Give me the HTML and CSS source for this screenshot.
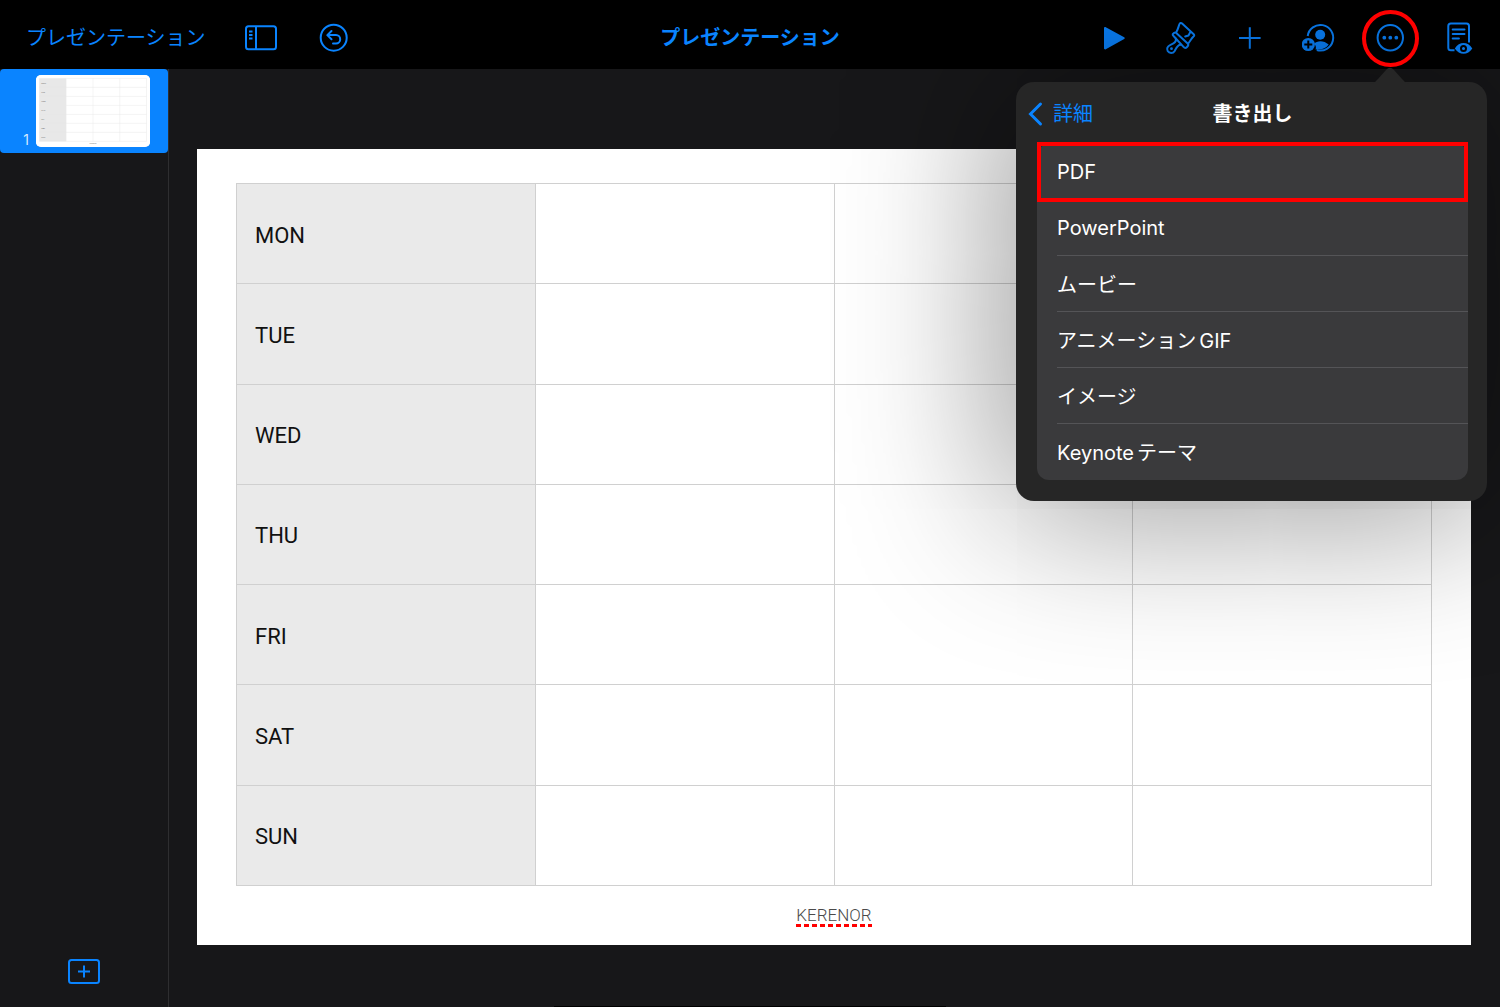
FILE: index.html
```html
<!DOCTYPE html>
<html lang="ja">
<head>
<meta charset="utf-8">
<meta name="viewport" content="width=device-width, initial-scale=1">
<title>プレゼンテーション</title>
<link rel="stylesheet" href="styles.css">
</head>
<body>
<div class="app">
  <header class="toolbar">
    <div class="toolbar-group toolbar-left">
      <a class="back-link" href="#">プレゼンテーション</a>
      <button class="tool" type="button" aria-label="表示">
        <svg viewBox="0 0 40 40"><rect x="6" y="8.300" width="30" height="23" rx="2.500"/><path d="M16 8.500v23M9 13.500h3.500M9 17h3.500M9 20.500h3.500"/></svg>
      </button>
      <button class="tool" type="button" aria-label="取り消す">
        <svg viewBox="0 0 40 40"><circle cx="19.700" cy="19.700" r="13"/><path d="M17.500 13l-4.200 4.100 4.200 4.100M13.500 17.100h8.500a4.200 4.200 0 0 1 0 8.400h-3" stroke-linecap="round" stroke-linejoin="round"/></svg>
      </button>
    </div>
    <h1 class="doc-title">プレゼンテーション</h1>
    <div class="toolbar-group toolbar-right">
      <button class="tool" type="button" aria-label="再生">
        <svg viewBox="0 0 40 40"><path class="solid" d="M9 10.200c0-1 .9-1.500 1.800-1L29.200 19.300c.8.500.8 1.200 0 1.700L10.800 31.200c-.9.500-1.800 0-1.800-1z"/></svg>
      </button>
      <button class="tool" type="button" aria-label="フォーマット">
        <svg viewBox="0 0 40 40" stroke-linejoin="round" stroke-linecap="round"><path d="M12.300 14.200C14 11.500 14.500 8.500 15.500 6c.5-1.200 1.700-1.200 2.600-.4L29.700 16.300c.8.800.7 1.600-.2 2.200-2 1.800-3.200 4.300-5.600 7.300M26.500 13.600l-2 3.900-3.300 1"/><path d="M12 14.700c-1-.8-3.800 1-3.300 2.200.2.500.7 1 1.300 1.600l9.500 10.400c1.300 1.500 2.200 1.500 3.500.1 1.500-1.500 1.800-2.500.7-3.500z"/><path d="M11.800 20.600c1 3.600-1.800 5-5.300 6.300-3.300 1.400-4 4-2.800 6.200 1.500 2.600 5.300 2.700 7-.1 1.500-3 2.800-6.600 6.300-6.300"/><circle class="solid" cx="7.500" cy="30.700" r="1.400"/></svg>
      </button>
      <button class="tool" type="button" aria-label="挿入">
        <svg viewBox="0 0 40 40"><path d="M16.800 9.200v21.600M6 20h21.600"/></svg>
      </button>
      <button class="tool" type="button" aria-label="共同制作">
        <svg viewBox="0 0 40 40"><path d="M5.700 18A12.800 12.800 0 1 1 14.800 32"/><circle class="solid" cx="18.200" cy="16.700" r="5"/><path class="solid" d="M12 25.700c3-3.400 10-3.700 14.700.9-2.600 3.900-7.500 5.500-13.200 4.800.9-2 .4-4.200-1.500-5.700z"/><circle class="solid" cx="6.300" cy="26.500" r="6.600"/><path class="cutout" d="M6.300 22.500v8M2.300 26.500h8"/></svg>
      </button>
      <div class="menu-anchor">
        <button class="tool" type="button" aria-label="詳細" aria-expanded="true">
          <svg viewBox="0 0 40 40"><circle cx="19.300" cy="19.700" r="12.700"/><g class="solid"><circle cx="13.300" cy="19.700" r="1.900"/><circle cx="19.300" cy="19.700" r="1.900"/><circle cx="25.300" cy="19.700" r="1.900"/></g></svg>
        </button>
        <section class="popover" aria-label="書き出し">
          <svg class="popover-arrow" viewBox="0 0 44 18"><path d="M0 18c6 0 7-2 10-5l8-9c3-3 5-3 8 0l8 9c3 3 4 5 10 5z"/></svg>
          <div class="popover-head">
            <button class="popover-back" type="button">
              <svg viewBox="0 0 16 26"><path d="M13.500 3L3.500 13l10 10"/></svg>詳細
            </button>
            <h2 class="popover-title">書き出し</h2>
          </div>
          <ul class="export-list">
            <li class="marked"><button type="button">PDF</button></li>
            <li><button type="button">PowerPoint</button></li>
            <li><button type="button">ムービー</button></li>
            <li><button type="button">アニメーション<span class="latin-tail">GIF</span></button></li>
            <li><button type="button">イメージ</button></li>
            <li><button type="button">Keynote<span class="kana-tail">テーマ</span></button></li>
          </ul>
        </section>
        <span class="ring"></span>
      </div>
      <button class="tool" type="button" aria-label="閲覧">
        <svg viewBox="0 0 40 40"><path d="M14.500 32.200h-3.700a2.500 2.500 0 0 1-2.500-2.500V8a2.500 2.500 0 0 1 2.500-2.500h15.700A2.500 2.500 0 0 1 29 8v16.500"/><path d="M12.700 11.500h11.800M12.700 16h11.800M12.700 20.500h6.200" stroke-linecap="round"/><path class="solid" d="M14.800 30.500c4.500-7.200 13-7.200 17.500 0-4.500 7-13 7-17.500 0z"/><circle class="pupil" cx="23.500" cy="30.400" r="2.500"/></svg>
      </button>
    </div>
  </header>

  <div class="workspace">
    <aside class="sidebar">
      <button class="slide-item" type="button" aria-label="スライド 1">
        <span class="slide-number">1</span>
        <svg class="thumb" viewBox="0 0 1274 796">
          <rect width="1274" height="796" fill="#fff"/>
          <rect x="39" y="34" width="300" height="703" fill="#e8e8e8"/>
          <path d="M39 34h1196v703H39zM637 34v703M936 34v703M39 134h1196M39 235h1196M39 335h1196M39 436h1196M39 536h1196M39 637h1196" fill="none" stroke="#e6e6e6" stroke-width="5"/>
          <g font-size="24" fill="#777"><text x="58" y="93">MON</text><text x="58" y="193">TUE</text><text x="58" y="293">WED</text><text x="58" y="394">THU</text><text x="58" y="494">FRI</text><text x="58" y="595">SAT</text><text x="58" y="695">SUN</text><text x="598" y="772" font-size="18">KERENOR</text></g>
        </svg>
      </button>
      <button class="tool add-slide" type="button" aria-label="スライドを追加">
        <svg viewBox="0 0 40 40"><rect x="5" y="9" width="30" height="23" rx="2.500"/><path d="M20 14.500v12M14 20.500h12"/></svg>
      </button>
    </aside>
    <main class="canvas">
      <article class="slide">
        <table class="week">
          <tr><th scope="row">MON</th><td></td><td></td><td></td></tr>
          <tr><th scope="row">TUE</th><td></td><td></td><td></td></tr>
          <tr><th scope="row">WED</th><td></td><td></td><td></td></tr>
          <tr><th scope="row">THU</th><td></td><td></td><td></td></tr>
          <tr><th scope="row">FRI</th><td></td><td></td><td></td></tr>
          <tr><th scope="row">SAT</th><td></td><td></td><td></td></tr>
          <tr><th scope="row">SUN</th><td></td><td></td><td></td></tr>
        </table>
        <p class="caption"><span class="misspelled">KERENOR</span></p>
      </article>
    </main>
  </div>
  <div class="home-bar"></div>
</div>
</body>
</html>
```
FILE: styles.css
```css
:root {
  --blue: #0a84ff;
  --red: #ff0000;
  --surface: #171719;
}

* { box-sizing: border-box; }

body {
  margin: 0;
  background: var(--surface);
  font-family: Inter, "Noto Sans CJK JP", sans-serif;
  font-size: 20px;
}

button {
  padding: 0;
  border: 0;
  background: none;
  color: inherit;
  font: inherit;
  text-align: left;
}

.app {
  display: flex;
  flex-direction: column;
  min-height: 100vh;
  overflow: hidden;
}

/* Toolbar */
.toolbar {
  position: relative;
  z-index: 1;
  display: grid;
  grid-template-columns: 1fr auto 1fr;
  align-items: center;
  height: 69px;
  padding: 7px 20px 0 26px;
  background: #000;
  color: var(--blue);
}

.toolbar-group { display: flex; align-items: center; }
.toolbar-left { gap: 34px; }
.toolbar-right { justify-content: flex-end; gap: 29px; margin-left: -6px; }

.back-link { color: inherit; text-decoration: none; white-space: nowrap; line-height: 28px; }

.doc-title { margin: 0 6px 0 0; font-size: 20px; line-height: 28px; font-weight: 700; white-space: nowrap; }

.tool {
  display: block;
  width: 40px;
  height: 40px;
  color: var(--blue);
}

.tool svg {
  display: block;
  width: 40px;
  height: 40px;
  fill: none;
  stroke: currentColor;
  stroke-width: 2;
}

.tool .solid { fill: currentColor; stroke: none; }
.tool .cutout { stroke: #000; }
.tool .pupil { fill: currentColor; stroke: #000; stroke-width: 2; }

.menu-anchor { position: relative; }

.ring {
  position: absolute;
  top: -8px;
  left: -9px;
  width: 57px;
  height: 57px;
  border: 4px solid var(--red);
  border-radius: 50%;
  pointer-events: none;
}

/* Export menu */
.popover {
  position: absolute;
  top: 64px;
  right: -76px;
  width: 471px;
  padding: 0 19px 21px 21px;
  border-radius: 18px;
  background: #262626;
  color: #fff;
  box-shadow: 0 0 160px 10px rgba(0, 0, 0, .45);
}

.popover-arrow {
  position: absolute;
  top: -16px;
  right: 75px;
  width: 44px;
  height: 18px;
  fill: #262626;
}

.popover-head {
  display: grid;
  grid-template-columns: 1fr auto 1fr;
  align-items: center;
  height: 62px;
  padding-top: 2px;
}

.popover-back {
  display: flex;
  align-items: center;
  gap: 10px;
  margin-left: -10px;
  color: var(--blue);
  line-height: 28px;
}

.popover-back svg { width: 16px; height: 26px; fill: none; stroke: currentColor; stroke-width: 3; stroke-linecap: round; }

.popover-title { margin: 0; font-size: 20px; line-height: 28px; font-weight: 700; }

.export-list {
  margin: 0;
  padding: 0;
  border-radius: 12px;
  background: #3a3a3c;
  list-style: none;
}

.export-list li { position: relative; padding-left: 20px; }

.export-list button {
  display: block;
  width: 100%;
  height: 56px;
  border-bottom: 1px solid #545457;
}

.export-list .marked button,
.export-list li:last-child button { border-bottom-color: transparent; }

.marked::after {
  content: "";
  position: absolute;
  inset: -2px 0;
  border: 4px solid var(--red);
}

.latin-tail, .kana-tail { margin-left: 3px; }

/* Slide navigator */
.workspace { display: flex; flex: 1; }

.sidebar {
  display: flex;
  flex-direction: column;
  justify-content: space-between;
  align-items: center;
  width: 169px;
  padding-bottom: 16px;
  border-right: 1px solid #2e2e30;
}

.slide-item {
  display: flex;
  align-items: flex-end;
  justify-content: flex-end;
  gap: 7px;
  width: 100%;
  padding: 6px 18px 6px 0;
  border-radius: 4px;
  background: var(--blue);
}

.slide-number { color: #d5e8ff; font-size: 14px; line-height: 14px; }

.thumb { width: 114px; height: 72px; border-radius: 5px; background: #fff; font-family: Roboto, sans-serif; }

/* Slide */
.canvas { flex: 1; padding: 80px 29px 60px 28px; }

.slide {
  padding: 34px 39px 18px;
  background: #fff;
  font-family: Roboto, sans-serif;
}

.week { width: 100%; height: 703px; border-collapse: collapse; table-layout: fixed; }

.week th, .week td { height: 100px; padding: 0; border: 1px solid #d0d0d0; }

.week th {
  padding: 3px 0 0 18px;
  background: #eaeaea;
  color: #111;
  font-size: 22px;
  font-weight: 400;
  text-align: left;
}

.caption {
  margin: 17px 0 0;
  color: #4a4a4a;
  font-size: 17px;
  font-weight: 300;
  line-height: 24px;
  text-align: center;
}

.misspelled {
  display: inline-block;
  background: repeating-linear-gradient(to right, var(--red) 0 5px, transparent 5px 8px) left bottom / 100% 3px no-repeat;
}

.home-bar {
  position: fixed;
  bottom: 0;
  left: 50%;
  width: 392px;
  height: 1px;
  margin-left: -196px;
  background: #000;
}
```
